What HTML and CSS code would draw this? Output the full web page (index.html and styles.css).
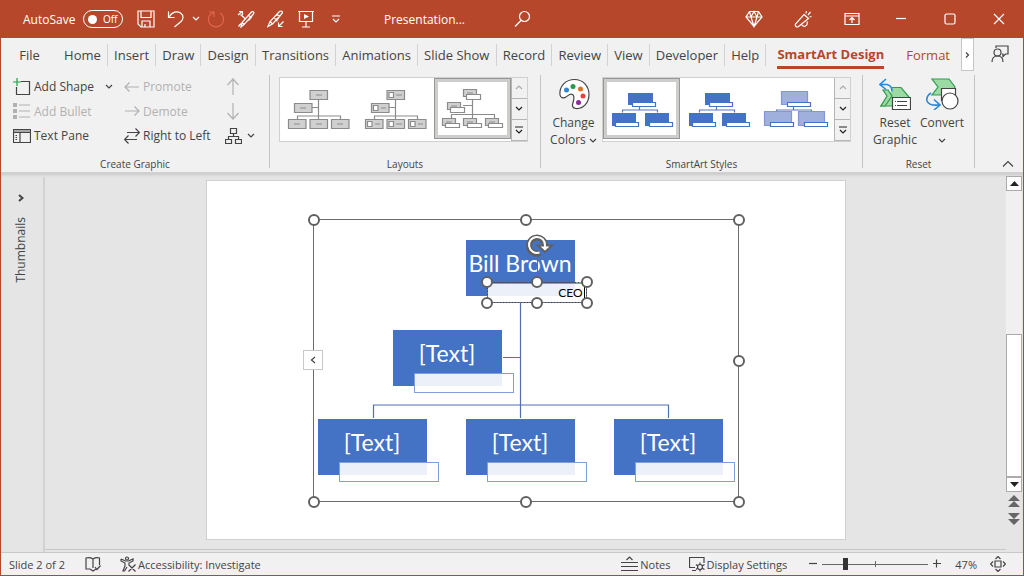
FILE: index.html
```html
<!DOCTYPE html>
<html lang="en">
<head>
    <meta charset="UTF-8">
    <meta name="viewport" content="width=device-width, initial-scale=1.0">
    <title>Presentation</title>
    <link rel="stylesheet" href="styles.css">
</head>
<body>
    <!-- Shared thumbnails -->
    <svg class="defs" width="0" height="0" aria-hidden="true">
        <defs>
            <g id="org-lines">
                <path d="M38.5 21v19M32 28.5h6.5M17.5 40v-3h43v3"/>
            </g>
            <g id="style-tree">
                <path class="st-line" d="M35.5 28v3M18.5 33.500v-2.500h35v2.500"/>
                <path class="st-box" d="M24 14h25v12H24zM8 34h24v13H8zM41 34h24v13H41z"/>
                <path class="st-tag" d="M28.500 23.500h23v4h-23zM11.500 43.500h23v4h-23zM45.500 43.500h23v4h-23z"/>
            </g>
        </defs>
    </svg>

    <div class="window">
        <header class="titlebar">
            <label class="autosave">AutoSave
                <span class="switch"><input type="checkbox" aria-label="AutoSave"><span>Off</span></span>
            </label>
            <div class="quick">
                <button class="icon-btn" aria-label="Save"><svg width="18" height="18" viewBox="0 0 18 18"><path d="M1 1h16v16H4l-3-3zM4 1v6.500h10V1M5 17v-6h8v6M8 14v3"/></svg></button>
                <button class="icon-btn" aria-label="Undo"><svg width="18" height="18" viewBox="0 0 18 18"><path d="M1.500 1.500v6h6M2 7c3-5 8-6.500 11.500-4s3 6 .5 8.500L7.500 17"/></svg></button>
                <button class="icon-btn narrow" aria-label="Undo list"><svg width="8" height="6" viewBox="0 0 8 6"><path d="M1 1l3 3 3-3"/></svg></button>
                <button class="icon-btn faded" aria-label="Redo"><svg width="18" height="18" viewBox="0 0 18 18"><path d="M2 2h5v5M6.500 2.500C3 4 1 7 1.500 10.500a7.600 7.600 0 0 0 15 0c.3-3-1-6-3.500-7.500"/></svg></button>
                <button class="icon-btn" aria-label="Ink to shape"><svg width="18" height="18" viewBox="0 0 18 18"><path d="M4 17l1-4.500 9-10q1.500-1.500 2.500-.5t-.5 2.500l-9 10zM5 12.500L7 14.500M11 5.500l3.500 1.500-3 3.500M1 5l4-3.500M2 1.500h3.500V5M8 8.500L3.500 4.500M1.500 16.500L4 13.500"/></svg></button>
                <button class="icon-btn" aria-label="Ink to text"><svg width="18" height="18" viewBox="0 0 18 18"><path d="M1 16.500l2-5 9.500-10q1.500-1 2.500 0t-.5 2.500L5.500 14zM3 11.500L5.500 14M9.500 4.500L13 6l-3 4M16.500 11.500l-5 5M11.500 12.500v4h4M7 8.500q3 0 3 3"/></svg></button>
                <button class="icon-btn" aria-label="Start slide show"><svg width="18" height="18" viewBox="0 0 18 18"><path d="M1 1.500h16M2.500 1.500v10h13v-10M9 11.500v5.500M5 17h8"/><path class="solid" d="M7 4l5 2.500L7 9z"/></svg></button>
                <button class="icon-btn" aria-label="Customize toolbar"><svg width="10" height="8" viewBox="0 0 10 8"><path d="M1 1h8M2 4l3 3 3-3"/></svg></button>
            </div>
            <span class="doc-name">Presentation...</span>
            <button class="icon-btn" aria-label="Search"><svg width="18" height="18" viewBox="0 0 18 18"><circle cx="10.500" cy="6.500" r="5"/><path d="M7 10.500L1 16.500"/></svg></button>
            <div class="win-buttons">
                <button aria-label="Premium"><svg width="18" height="18" viewBox="0 0 18 18"><path d="M4.500 1.500h9L17 7l-8 9.500L1 7zM1 7h16M4.500 1.500L6 7l3 9.500L12 7l1.500-5.500M6 7l3-5.500L12 7"/></svg></button>
                <button aria-label="What's new"><svg width="18" height="18" viewBox="0 0 18 18"><path d="M10 4.500l4.500 4L4.500 16.500q-1.500 1-2.500 0t-.5-2.500zM7.500 14.500q1.500 2.500 4 1.500t1.500-4.500M12 3.500l.5-2.500M14 5l2.500-3M15.500 7l2-.5"/></svg></button>
                <button aria-label="Ribbon display options"><svg width="16" height="14" viewBox="0 0 16 14"><path d="M1 1.500h14v11H1zM1 4h14M8 11V6M5.500 8L8 5.500 10.500 8"/></svg></button>
                <button aria-label="Minimize"><svg width="12" height="12" viewBox="0 0 12 12"><path d="M1 5.500h10"/></svg></button>
                <button aria-label="Maximize"><svg width="12" height="12" viewBox="0 0 12 12"><rect x="1" y="1" width="10" height="10" rx="1.500"/></svg></button>
                <button aria-label="Close"><svg width="12" height="12" viewBox="0 0 12 12"><path d="M1 1l10 10M11 1L1 11"/></svg></button>
            </div>
        </header>

        <div class="tabs">
            <button class="tab file">File</button>
            <nav class="tab-list">
                <button class="tab">Home</button>
                <button class="tab">Insert</button>
                <button class="tab">Draw</button>
                <button class="tab">Design</button>
                <button class="tab">Transitions</button>
                <button class="tab">Animations</button>
                <button class="tab">Slide Show</button>
                <button class="tab">Record</button>
                <button class="tab">Review</button>
                <button class="tab">View</button>
                <button class="tab">Developer</button>
                <button class="tab">Help</button>
            </nav>
            <button class="tab context active">SmartArt Design</button>
            <button class="tab context">Format</button>
            <button class="tab-more" aria-label="More tabs"><svg width="5" height="6" viewBox="0 0 5 6"><path d="M1 .5L3.500 3 1 5.500"/></svg></button>
            <button class="share" aria-label="Comments"><svg width="18" height="18" viewBox="0 0 18 18"><circle cx="6.500" cy="7.500" r="3.500"/><path d="M1 17q0-6 5.500-6t5.500 6M5 3V1h12v8h-2.500L12 11.500V9h-1"/></svg></button>
        </div>

        <div class="ribbon">
            <section class="group">
                <div class="commands">
                    <button class="cmd"><svg width="18" height="18" viewBox="0 0 18 18"><path d="M8 3.500h8.500v13h-13V9"/><path class="green" d="M4 0v8M0 4h8"/></svg>Add Shape<svg class="caret" width="8" height="6" viewBox="0 0 8 6"><path d="M1 1l3 3 3-3"/></svg></button>
                    <button class="cmd" disabled><svg width="16" height="14" viewBox="0 0 16 14"><path d="M1 7h14M5.500 2.500L1 7l4.500 4.500"/></svg>Promote</button>
                    <button class="cmd" disabled aria-label="Move up"><svg width="16" height="18" viewBox="0 0 16 18"><path d="M8 17V1M2.500 7L8 1l5.500 6"/></svg></button>

                    <button class="cmd" disabled><svg width="18" height="16" viewBox="0 0 18 16"><path d="M6 2h11M6 8h11M6 14h11"/><path class="solid" d="M0 0h4v4H0zM0 6h4v4H0zM0 12h4v4H0z"/></svg>Add Bullet</button>
                    <button class="cmd" disabled><svg width="16" height="14" viewBox="0 0 16 14"><path d="M1 7h14M10.500 2.500L15 7l-4.500 4.500"/></svg>Demote</button>
                    <button class="cmd" disabled aria-label="Move down"><svg width="16" height="18" viewBox="0 0 16 18"><path d="M8 1v16M2.500 11L8 17l5.500-6"/></svg></button>

                    <button class="cmd"><svg width="18" height="16" viewBox="0 0 18 16"><path d="M.5 1.500h17v13H.5zM.5 4.500h17M7 4.500v10M2.500 7.500H4M2.500 9.500H4M2.500 11.500H4"/><path class="grey" d="M1 2h16v2H1z"/></svg>Text Pane</button>
                    <button class="cmd"><svg width="16" height="16" viewBox="0 0 16 16"><path d="M3 4.500h12.500M11.500 .5l4 4-4 4M13 11.500H.5M4.500 7.500l-4 4 4 4"/></svg>Right to Left</button>
                    <button class="cmd layout-menu" aria-label="Org chart layout"><svg width="17" height="18" viewBox="0 0 17 18"><path d="M5.500 1.500h6v5h-6zM.5 12.500h6v4h-6zM10.500 12.500h6v4h-6zM8.500 6.500v3M3.500 12.500v-3h10v3"/></svg><svg width="8" height="6" viewBox="0 0 8 6"><path d="M1 1l3 3 3-3"/></svg></button>
                </div>
                <h2>Create Graphic</h2>
            </section>

            <section class="group">
                <div class="gallery layouts">
                    <button class="item" aria-label="Organization chart"><svg class="layout" viewBox="0 0 76 60"><use href="#org-lines"/><path class="box" d="M30 11.500h17.500v9H30zM14.500 24.500H32v9H14.500zM8.500 40.500H26v9H8.500zM30 40.500h17.500v9H30zM51.500 40.500H69v9H51.500z"/><path d="M36 16h6M20 29h6M14 45h6M36 45h6M57 45h6"/></svg></button>
                    <button class="item" aria-label="Picture organization chart"><svg class="layout" viewBox="0 0 76 60"><use href="#org-lines"/><path class="box" d="M30 11.500h17.500v9H30zM14.500 24.500H32v9H14.500zM8.500 40.500H26v9H8.500zM30 40.500h17.500v9H30zM51.500 40.500H69v9H51.500z"/><path class="pic" d="M32 13.500h4.500v5H32zM16.500 26.500H21v5h-4.500zM10.500 42.500H15v5h-4.500zM32 42.500h4.500v5H32zM53.500 42.500H58v5h-4.500z"/><path d="M39 16h6M24 29h5M18 45h5M39 45h6M61 45h5"/></svg></button>
                    <button class="item selected" aria-label="Name and title organization chart"><svg class="layout" viewBox="0 0 76 60"><path d="M38.500 20v19M29 26.500h9.500M17.500 39v-3.500h43V39"/><path class="box" d="M29.500 10.500h13v7h-13zM13.500 23.500h13v7h-13zM8.500 39.500h13v7h-13zM29.500 39.500h13v7h-13zM51.500 39.500h13v7h-13z"/><path d="M33 14h6M17 27h6M12 43h6M33 43h6M55 43h6"/><path class="pic" d="M32.500 15.500h14v5h-14zM16.500 28.500h14v5h-14zM11.500 44.500h14v4h-14zM33.500 44.500h14v4h-14zM54.500 44.500h14v4h-14z"/></svg></button>
                    <div class="scroller">
                        <button disabled aria-label="Previous row"><svg width="8" height="6" viewBox="0 0 8 6"><path d="M1 4l3-3 3 3"/></svg></button>
                        <button aria-label="Next row"><svg width="8" height="6" viewBox="0 0 8 6"><path d="M1 1l3 3 3-3"/></svg></button>
                        <button aria-label="More layouts"><svg width="8" height="8" viewBox="0 0 8 8"><path d="M0 1h8M1 4l3 3 3-3"/></svg></button>
                    </div>
                </div>
                <h2>Layouts</h2>
            </section>

            <section class="group">
                <div class="row spaced">
                    <button class="big">
                        <svg width="32" height="32" viewBox="0 0 32 32"><path class="paper" d="M2 17C1 8 8 1.500 16.500 1.500S31 8 31 16.500 25 31 18 30.500c-4-.5-4-3-3-6s2-6.500-.5-8-4 1-6.500 2.500-5.500 1-6-2z"/><circle class="c-blue" cx="8.500" cy="12" r="2.500"/><circle class="c-green" cx="15" cy="8.500" r="2.500"/><circle class="c-orange" cx="22.500" cy="11" r="2.500"/><circle class="c-red" cx="25" cy="18" r="2.500"/><circle class="c-purple" cx="20.500" cy="24.500" r="2.500"/></svg>
                        <span>Change</span>
                        <span>Colors <svg width="8" height="6" viewBox="0 0 8 6"><path d="M1 1l3 3 3-3"/></svg></span>
                    </button>
                    <div class="gallery">
                        <button class="item selected" aria-label="Simple fill"><svg class="style" viewBox="0 0 76 60"><use href="#style-tree"/></svg></button>
                        <button class="item" aria-label="White outline"><svg class="style" viewBox="0 0 76 60"><use href="#style-tree"/></svg></button>
                        <button class="item" aria-label="Subtle effect"><svg class="style subtle" viewBox="0 0 76 60"><path class="st-line" d="M35.500 28v3M18.500 33.500v-2.500h35v2.500"/><path class="st-box" d="M23.500 12.500h26v13h-26zM6.500 32.500h27v14h-27zM40.500 32.500h26v14h-26z"/><path class="st-tag" d="M29.500 23.500h23v4h-23zM12.500 43.500h23v4h-23zM46.500 43.500h23v4h-23z"/></svg></button>
                        <div class="scroller">
                            <button disabled aria-label="Previous row"><svg width="8" height="6" viewBox="0 0 8 6"><path d="M1 4l3-3 3 3"/></svg></button>
                            <button aria-label="Next row"><svg width="8" height="6" viewBox="0 0 8 6"><path d="M1 1l3 3 3-3"/></svg></button>
                            <button aria-label="More styles"><svg width="8" height="8" viewBox="0 0 8 8"><path d="M0 1h8M1 4l3 3 3-3"/></svg></button>
                        </div>
                    </div>
                </div>
                <h2>SmartArt Styles</h2>
            </section>

            <section class="group">
                <div class="row">
                    <button class="big">
                        <svg width="32" height="32" viewBox="0 0 32 32"><path class="leaf" d="M14 9.500h8l8 9.500-7 9H2l7-10-4-7z"/><path class="swoosh-bg" d="M0 0h13v14H0z"/><path class="leaf" d="M4 12h5l4 6-7 10H2l6-10z"/><path class="sheet" d="M13.500 19.500h18v12h-18z"/><path d="M18 23.500h10M18 27.500h10M16 23.500h1M16 27.500h1"/><path class="swoosh" d="M7 1L1 6.500l6 5M1 6.500h7q5 1 5 7"/></svg>
                        <span>Reset</span>
                        <span>Graphic</span>
                    </button>
                    <button class="big">
                        <svg width="34" height="32" viewBox="0 0 34 32"><path class="leaf" d="M7 1h17l6 8-6 8H7l6-8z"/><path class="sheet" d="M16.500 10.500h14v12h-14z"/><circle class="sheet" cx="25" cy="23" r="8"/><path class="swoosh" d="M6 15q-5 3-4 8 2 5 12 4M9 21.500l6 5.500-6 5"/></svg>
                        <span>Convert</span>
                        <span><svg width="8" height="6" viewBox="0 0 8 6"><path d="M1 1l3 3 3-3"/></svg></span>
                    </button>
                </div>
                <h2>Reset</h2>
            </section>

            <div class="ribbon-end">
                <button aria-label="Collapse ribbon"><svg width="12" height="8" viewBox="0 0 12 8"><path d="M1 6.500l5-5 5 5"/></svg></button>
            </div>
        </div>

        <main class="workspace">
            <aside class="thumbs">
                <button aria-label="Show thumbnails"><svg width="6" height="8" viewBox="0 0 6 8"><path d="M1 1l3.500 3L1 7"/></svg></button>
                <span>Thumbnails</span>
            </aside>

            <div class="stage">
                <div class="slide">
                    <svg class="overlay connectors" viewBox="0 0 638 358"><path d="M313.500 121v116M296 176.500h17M166.500 237v-13h295v13"/></svg>

                    <div class="node boss">Bill Brown<span class="tag">CEO</span></div>
                    <div class="node assistant">[Text]<span class="tag"></span></div>
                    <div class="node left">[Text]<span class="tag"></span></div>
                    <div class="node middle">[Text]<span class="tag"></span></div>
                    <div class="node right">[Text]<span class="tag"></span></div>

                    <!-- Selection frames and handles -->
                    <svg class="overlay" viewBox="0 0 638 358">
                        <path class="frame" d="M106.500 38.500h425v282h-425z"/>
                        <path class="dashed" d="M280.500 101.500h99v20h-99z"/>
                        <path class="frame" d="M330.500 74v23"/>
                        <path class="caret-line" d="M377.500 105v13"/>
                        <g class="handles">
                            <circle cx="107" cy="39" r="5"/><circle cx="319" cy="39" r="5"/><circle cx="532" cy="39" r="5"/>
                            <circle cx="532" cy="180" r="5"/>
                            <circle cx="107" cy="321" r="5"/><circle cx="319" cy="321" r="5"/><circle cx="532" cy="321" r="5"/>
                            <circle cx="280" cy="101" r="5"/><circle cx="330" cy="101" r="5"/><circle cx="380" cy="101" r="5"/>
                            <circle cx="280" cy="122" r="5"/><circle cx="330" cy="122" r="5"/><circle cx="380" cy="122" r="5"/>
                        </g>
                        <path class="rot-edge" d="M333 72a8 8 0 1 1 5-7.500"/>
                        <path class="rot-head" d="M331 64.500h14l-7 6.500z"/>
                        <path class="rot-core" d="M332.500 71.500a8 8 0 1 1 5.500-7v2"/>
                    </svg>
                    <button class="pane-toggle" aria-label="Open text pane"><svg width="6" height="8" viewBox="0 0 6 8"><path d="M5 1L1.500 4 5 7"/></svg></button>
                </div>
            </div>

            <div class="scrollbar">
                <button aria-label="Scroll up"><svg width="9" height="5" viewBox="0 0 9 5"><path class="solid" d="M0 5l4.500-5L9 5z"/></svg></button>
                <div class="track"><div class="thumb"></div></div>
                <button aria-label="Scroll down"><svg width="9" height="5" viewBox="0 0 9 5"><path class="solid" d="M0 0l4.500 5L9 0z"/></svg></button>
                <button class="jump" aria-label="Previous slide"><svg width="12" height="12" viewBox="0 0 12 12"><path class="solid" d="M0 6l6-6 6 6zM0 12l6-6 6 6z"/></svg></button>
                <button class="jump" aria-label="Next slide"><svg width="12" height="12" viewBox="0 0 12 12"><path class="solid" d="M0 0l6 6 6-6zM0 6l6 6 6-6z"/></svg></button>
            </div>
        </main>

        <footer class="status">
            <span>Slide 2 of 2</span>
            <button class="book" aria-label="Spelling"><svg width="16" height="16" viewBox="0 0 16 16"><path d="M8 3v9M8 3Q5 1 1 2v11h4l3 2 3-2M8 3q3-2 6.500-1v7M10 11l2 2.500 3.500-4"/></svg></button>
            <button class="access"><svg width="16" height="16" viewBox="0 0 16 16"><circle cx="7" cy="2.500" r="1.500"/><path d="M1 3l4.500 2h3L13 3v2L9 7v2M1 3v2l4 2v3l-2 5h1.500L7 11M8.500 8.500l7 7M15.500 8.500l-7 7"/></svg>Accessibility: Investigate</button>
            <div class="status-right">
                <button><svg width="17" height="16" viewBox="0 0 17 16"><path d="M5.500 4L8.500 1l3 3M0 6.500h17M0 10.500h17M0 14.500h17"/></svg>Notes</button>
                <button class="display"><svg width="16" height="16" viewBox="0 0 16 16"><path d="M6 11.500H.5v-10h14.500V7M3 14.500h4"/><circle cx="11" cy="11" r="2.500"/><path d="M11 6.500v2M11 13.500v2M7 8.500l2 1.500M13 12l2.500 1.500M7 13.500L9 12M13 10l2.500-1.500"/></svg>Display Settings</button>
                <button class="zoom-btn" aria-label="Zoom out"><svg width="10" height="10" viewBox="0 0 10 10"><path d="M1 4.500h8"/></svg></button>
                <input class="zoom" type="range" min="0" max="100" value="20" aria-label="Zoom">
                <button class="zoom-btn" aria-label="Zoom in"><svg width="10" height="10" viewBox="0 0 10 10"><path d="M1 4.500h8M4.500 .5v8"/></svg></button>
                <button class="percent">47%</button>
                <button aria-label="Fit slide to window"><svg width="16" height="16" viewBox="0 0 16 16"><path d="M5 5h6v6H5zM5.500 3L8 .5 10.500 3M5.500 13L8 15.500l2.500-2.500M3 5.500L.5 8 3 10.500M13 5.500L15.500 8 13 10.500"/></svg></button>
            </div>
        </footer>
    </div>
</body>
</html>
```
FILE: styles.css
```css
* {
    box-sizing: border-box;
}
body {
    margin: 0;
    font-family: "Open Sans", "Noto Sans", sans-serif;
    font-size: 12px;
    color: #444;
}
button {
    display: flex;
    align-items: center;
    justify-content: center;
    margin: 0;
    padding: 0;
    border: none;
    background: none;
    color: inherit;
    font: inherit;
    white-space: nowrap;
}
svg {
    flex: none;
    fill: none;
    stroke: currentColor;
    stroke-width: 1.2;
}
.solid {
    fill: currentColor;
    stroke: none;
}
.defs {
    position: absolute;
}
.window {
    display: flex;
    flex-direction: column;
    height: 100vh;
    border: 1px solid #b7472a;
    border-top: none;
    background: #f1f1f1;
}

/* Title bar */
.titlebar {
    display: flex;
    align-items: center;
    height: 38px;
    padding-left: 22px;
    background: #b7472a;
    color: #fff;
}
.autosave {
    display: flex;
    align-items: center;
    gap: 8px;
    width: 108px;
}
.switch {
    display: flex;
    align-items: center;
    justify-content: space-between;
    width: 40px;
    height: 18px;
    padding: 0 5px 0 4px;
    border: 1px solid #fff;
    border-radius: 9px;
    font-size: 10px;
}
.switch input {
    appearance: none;
    width: 9px;
    height: 9px;
    margin: 0;
    border-radius: 50%;
    background: #fff;
}
.quick {
    display: flex;
}
.icon-btn {
    width: 30px;
    height: 38px;
}
.icon-btn.narrow {
    width: 10px;
}
.icon-btn.faded {
    color: #e2664a;
}
.doc-name {
    width: 124px;
    margin-left: 33px;
}
.win-buttons {
    display: flex;
    margin-left: auto;
}
.win-buttons button {
    width: 49px;
    height: 38px;
}

/* Tabs */
.tabs {
    display: flex;
    height: 35px;
    padding-right: 14px;
    font-size: 13px;
}
.tab {
    height: 34px;
    padding: 0 2px;
}
.tab.file {
    width: 57px;
}
.tab-list {
    display: flex;
    flex: 1;
    align-items: center;
    height: 33px;
}
.tab-list .tab {
    flex: 1 1 auto;
    height: 22px;
    border-right: 1px solid #d2d2d2;
}
.tab.context {
    margin: 0 11px;
    padding: 0;
    color: #b7472a;
}
.tab.active {
    border-top: 3px solid transparent;
    border-bottom: 3px solid #b7472a;
    height: 31px;
    font-weight: 700;
}
.tab-more {
    width: 13px;
    height: 33px;
    border: 1px solid #c6c6c6;
    background: #fff;
}
.share {
    margin-left: 17px;
    height: 32px;
}

/* Ribbon */
.ribbon {
    display: grid;
    grid-template-columns: 269fr 271fr 322fr 112fr 48fr;
    padding: 2px 0 4px;
    border-bottom: 1px solid #d0d0d0;
}
.group {
    display: flex;
    flex-direction: column;
    justify-content: space-between;
    align-items: center;
    height: 93px;
    border-right: 1px solid #c4c4c4;
}
.group h2 {
    margin: 0;
    font-size: 10px;
    line-height: 8px;
    font-weight: 400;
}
.commands {
    display: grid;
    grid-template-columns: 111px 101px auto;
    grid-template-rows: 23px 26px 23px;
    align-self: stretch;
    padding-left: 12px;
}
.cmd {
    justify-content: flex-start;
    gap: 3px;
}
.cmd:disabled {
    color: #b1b1b1;
}
.layout-menu {
    gap: 5px;
}
.caret {
    margin-left: 8px;
}
.green {
    stroke: #21a046;
}
.grey {
    fill: #a8a8a8;
    stroke: none;
}
.row {
    display: flex;
    justify-content: center;
}
.spaced {
    gap: 5px;
    margin-right: 2px;
}
.big {
    flex-direction: column;
    justify-content: flex-start;
    width: 47px;
    padding-top: 3px;
    line-height: 17px;
}
.big > svg {
    margin-bottom: 4px;
}
.gallery {
    display: flex;
    height: 65px;
    margin-top: 2px;
    border: 1px solid #d0d0d0;
    background: #fff;
}
.layouts {
    margin-right: 4px;
}
.item {
    width: 77px;
    height: 61px;
}
.item.selected {
    border: 4px solid #cdcdcb;
    outline: 1px solid #979795;
    outline-offset: -1px;
}
.item svg {
    width: 76px;
    height: 60px;
}
.scroller {
    display: grid;
    grid-template-rows: repeat(3, 1fr);
    width: 16px;
}
.scroller button {
    border: 1px solid #b5b5b5;
    border-width: 0 0 1px 1px;
    background: #f1f1f1;
    color: #222;
}
.scroller button:disabled {
    color: #aaa;
}
.layout {
    stroke: #8b8b8b;
}
.box {
    fill: #d0d0d0;
}
.pic {
    fill: #fff;
}
.st-line {
    stroke: #5b79bb;
}
.st-box {
    fill: #4472c4;
    stroke: none;
}
.st-tag {
    fill: #fff;
    stroke: #4472c4;
}
.subtle .st-box {
    fill: #9fb0dc;
    stroke: #8398d0;
}
.paper,
.sheet {
    fill: #fff;
}
.c-blue {
    fill: #2b88d8;
    stroke: none;
}
.c-green {
    fill: #259a48;
    stroke: none;
}
.c-orange {
    fill: #e3701a;
    stroke: none;
}
.c-red {
    fill: #e8423c;
    stroke: none;
}
.c-purple {
    fill: #8c2ba0;
    stroke: none;
}
.leaf {
    fill: #9bdba3;
    stroke: #309b50;
}
.swoosh {
    stroke: #2b88d8;
    stroke-width: 1.6;
}
.swoosh-bg {
    fill: #f1f1f1;
    stroke: none;
}
.ribbon-end {
    display: flex;
    align-items: flex-end;
    justify-content: flex-end;
    padding-right: 9px;
}

/* Editing area */
.workspace {
    display: flex;
    flex: 1;
    min-height: 0;
    background: #e5e5e5;
    box-shadow: inset 0 3px 3px -1px #cacaca;
}
.thumbs {
    display: flex;
    flex-direction: column;
    align-items: center;
    gap: 15px;
    width: 44px;
    margin-top: 4px;
    padding: 17px 3px 0 0;
    border-right: 2px solid #d2d2d2;
}
.thumbs span {
    writing-mode: vertical-rl;
    transform: rotate(180deg);
}
.thumbs svg {
    stroke-width: 2;
}
.stage {
    display: flex;
    flex: 1;
    justify-content: center;
    padding-top: 8px;
    border-bottom: 1px solid #c8c8c8;
    margin-bottom: 2px;
}
.slide {
    position: relative;
    width: 638px;
    height: 358px;
    background: #fff;
    outline: 1px solid #d0d0d0;
}
.overlay {
    position: absolute;
    inset: 0;
}
.connectors {
    stroke: #5270ae;
}
.node {
    position: absolute;
    width: 109px;
    height: 56px;
    background: #4472c4;
    color: #fff;
    font-family: Lato, sans-serif;
    font-size: 23px;
    line-height: 46px;
    text-align: center;
    white-space: nowrap;
}
.tag {
    position: absolute;
    left: 21px;
    top: 43px;
    width: 100px;
    height: 20px;
    padding-right: 3px;
    border: 1px solid #7e9fdb;
    background: rgba(255, 255, 255, 0.9);
    color: #000;
    font-size: 12px;
    line-height: 18px;
    text-align: right;
}
.boss {
    left: 259px;
    top: 59px;
}
.assistant {
    left: 186px;
    top: 149px;
}
.left {
    left: 111px;
    top: 238px;
}
.middle {
    left: 259px;
    top: 238px;
}
.right {
    left: 407px;
    top: 238px;
}
.frame {
    stroke: #6b6b6b;
    stroke-width: 1;
}
.dashed {
    stroke: #444;
    stroke-width: 1;
    stroke-dasharray: 2 1;
}
.caret-line {
    stroke: #000;
    stroke-width: 1;
}
.handles {
    fill: #fff;
    stroke: #606060;
    stroke-width: 2;
}
.rot-edge {
    stroke: #606060;
    stroke-width: 6;
}
.rot-head {
    fill: #fff;
    stroke: #606060;
    stroke-width: 2;
}
.rot-core {
    stroke: #fff;
    stroke-width: 2;
}
.pane-toggle {
    position: absolute;
    left: 96px;
    top: 169px;
    width: 20px;
    height: 20px;
    border: 1px solid #c8c8c8;
    background: #fff;
}
.scrollbar {
    display: flex;
    flex-direction: column;
    width: 16px;
    margin: 3px 1px 24px 0;
}
.scrollbar button {
    height: 15px;
    border: 1px solid #ababab;
    background: #fff;
    color: #222;
}
.scrollbar .jump {
    height: 18px;
    border: none;
    background: none;
    color: #666;
}
.track {
    display: flex;
    flex: 1;
    align-items: flex-end;
    background: #f0f0f0;
}
.thumb {
    width: 100%;
    height: 50%;
    border: 1px solid #ababab;
    background: #fff;
}

/* Status bar */
.status {
    display: flex;
    align-items: center;
    height: 23px;
    padding: 0 17px 0 8px;
    border-top: 1px solid #c8c8c8;
    font-size: 11px;
}
.status button {
    gap: 2px;
}
.book {
    margin-left: 20px;
}
.access {
    margin-left: 19px;
}
.status-right {
    display: flex;
    align-items: center;
    margin-left: auto;
}
.display {
    margin-left: 18px;
}
.zoom-btn {
    width: 10px;
}
.display + .zoom-btn {
    margin-left: 21px;
}
.zoom {
    appearance: none;
    width: 106px;
    height: 14px;
    margin: 0 4px;
    background:
        linear-gradient(#666, #666) center / 100% 1px no-repeat,
        linear-gradient(#666, #666) center / 1px 6px no-repeat;
}
.zoom::-webkit-slider-thumb {
    appearance: none;
    width: 5px;
    height: 12px;
    background: #333;
}
.percent {
    margin: 0 13px;
}
```
